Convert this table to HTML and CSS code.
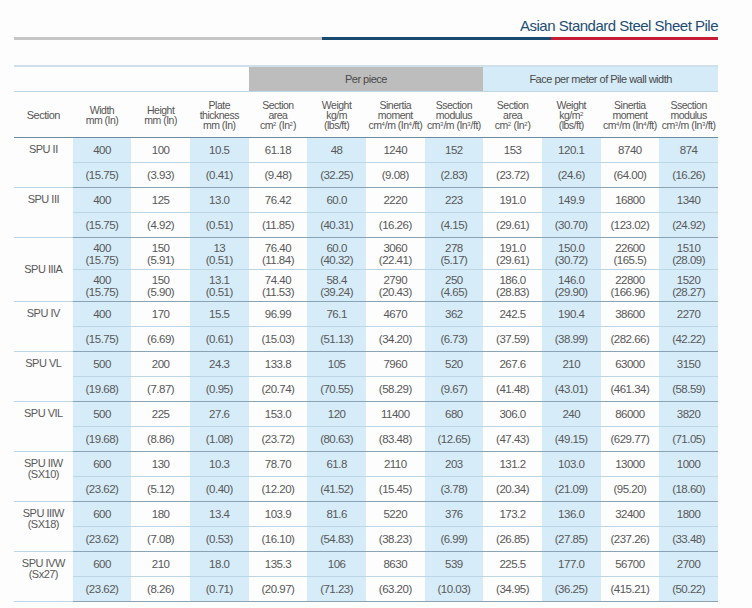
FILE: index.html
```html
<!DOCTYPE html>
<html>
<head>
<meta charset="utf-8">
<link rel="stylesheet" href="styles.css">
</head>
<body>
<div class="page">
  <h1 class="title">Asian Standard Steel Sheet Pile</h1>
  <div class="bar"><span class="g"></span><span class="b"></span><span class="r"></span></div>
  <table class="spec">
    <colgroup>
      <col><col class="sh"><col><col class="sh"><col><col class="sh"><col><col class="sh"><col><col class="sh"><col><col class="sh">
    </colgroup>
    <thead>
      <tr class="groups">
        <th colspan="4"></th>
        <th colspan="4" class="pp">Per piece</th>
        <th colspan="4" class="fm">Face per meter of Pile wall width</th>
      </tr>
      <tr class="heads">
        <th>Section</th>
        <th>Width<br>mm (In)</th>
        <th>Height<br>mm (In)</th>
        <th>Plate<br>thickness<br>mm (In)</th>
        <th>Section<br>area<br>cm<sup>2</sup> (In<sup>2</sup>)</th>
        <th>Weight<br>kg/m<br>(lbs/ft)</th>
        <th>Sinertia<br>moment<br>cm<sup>4</sup>/m (In<sup>4</sup>/ft)</th>
        <th>Ssection<br>modulus<br>cm<sup>3</sup>/m (In<sup>3</sup>/ft)</th>
        <th>Section<br>area<br>cm<sup>2</sup> (In<sup>2</sup>)</th>
        <th>Weight<br>kg/m<sup>2</sup><br>(lbs/ft)</th>
        <th>Sinertia<br>moment<br>cm<sup>4</sup>/m (In<sup>4</sup>/ft)</th>
        <th>Ssection<br>modulus<br>cm<sup>3</sup>/m (In<sup>3</sup>/ft)</th>
      </tr>
    </thead>
    <tbody>
      <tr class="a"><td class="sec" rowspan="2">SPU II</td><td>400</td><td>100</td><td>10.5</td><td>61.18</td><td>48</td><td>1240</td><td>152</td><td>153</td><td>120.1</td><td>8740</td><td>874</td></tr>
      <tr class="b"><td>(15.75)</td><td>(3.93)</td><td>(0.41)</td><td>(9.48)</td><td>(32.25)</td><td>(9.08)</td><td>(2.83)</td><td>(23.72)</td><td>(24.6)</td><td>(64.00)</td><td>(16.26)</td></tr>

      <tr class="a"><td class="sec" rowspan="2">SPU III</td><td>400</td><td>125</td><td>13.0</td><td>76.42</td><td>60.0</td><td>2220</td><td>223</td><td>191.0</td><td>149.9</td><td>16800</td><td>1340</td></tr>
      <tr class="b"><td>(15.75)</td><td>(4.92)</td><td>(0.51)</td><td>(11.85)</td><td>(40.31)</td><td>(16.26)</td><td>(4.15)</td><td>(29.61)</td><td>(30.70)</td><td>(123.02)</td><td>(24.92)</td></tr>

      <tr class="a dbl"><td class="sec mid" rowspan="2">SPU IIIA</td><td>400<br>(15.75)</td><td>150<br>(5.91)</td><td>13<br>(0.51)</td><td>76.40<br>(11.84)</td><td>60.0<br>(40.32)</td><td>3060<br>(22.41)</td><td>278<br>(5.17)</td><td>191.0<br>(29.61)</td><td>150.0<br>(30.72)</td><td>22600<br>(165.5)</td><td>1510<br>(28.09)</td></tr>
      <tr class="b dbl"><td>400<br>(15.75)</td><td>150<br>(5.90)</td><td>13.1<br>(0.51)</td><td>74.40<br>(11.53)</td><td>58.4<br>(39.24)</td><td>2790<br>(20.43)</td><td>250<br>(4.65)</td><td>186.0<br>(28.83)</td><td>146.0<br>(29.90)</td><td>22800<br>(166.96)</td><td>1520<br>(28.27)</td></tr>

      <tr class="a"><td class="sec" rowspan="2">SPU IV</td><td>400</td><td>170</td><td>15.5</td><td>96.99</td><td>76.1</td><td>4670</td><td>362</td><td>242.5</td><td>190.4</td><td>38600</td><td>2270</td></tr>
      <tr class="b"><td>(15.75)</td><td>(6.69)</td><td>(0.61)</td><td>(15.03)</td><td>(51.13)</td><td>(34.20)</td><td>(6.73)</td><td>(37.59)</td><td>(38.99)</td><td>(282.66)</td><td>(42.22)</td></tr>

      <tr class="a"><td class="sec" rowspan="2">SPU VL</td><td>500</td><td>200</td><td>24.3</td><td>133.8</td><td>105</td><td>7960</td><td>520</td><td>267.6</td><td>210</td><td>63000</td><td>3150</td></tr>
      <tr class="b"><td>(19.68)</td><td>(7.87)</td><td>(0.95)</td><td>(20.74)</td><td>(70.55)</td><td>(58.29)</td><td>(9.67)</td><td>(41.48)</td><td>(43.01)</td><td>(461.34)</td><td>(58.59)</td></tr>

      <tr class="a"><td class="sec" rowspan="2">SPU VIL</td><td>500</td><td>225</td><td>27.6</td><td>153.0</td><td>120</td><td>11400</td><td>680</td><td>306.0</td><td>240</td><td>86000</td><td>3820</td></tr>
      <tr class="b"><td>(19.68)</td><td>(8.86)</td><td>(1.08)</td><td>(23.72)</td><td>(80.63)</td><td>(83.48)</td><td>(12.65)</td><td>(47.43)</td><td>(49.15)</td><td>(629.77)</td><td>(71.05)</td></tr>

      <tr class="a"><td class="sec" rowspan="2">SPU IIW<br>(SX10)</td><td>600</td><td>130</td><td>10.3</td><td>78.70</td><td>61.8</td><td>2110</td><td>203</td><td>131.2</td><td>103.0</td><td>13000</td><td>1000</td></tr>
      <tr class="b"><td>(23.62)</td><td>(5.12)</td><td>(0.40)</td><td>(12.20)</td><td>(41.52)</td><td>(15.45)</td><td>(3.78)</td><td>(20.34)</td><td>(21.09)</td><td>(95.20)</td><td>(18.60)</td></tr>

      <tr class="a"><td class="sec" rowspan="2">SPU IIIW<br>(SX18)</td><td>600</td><td>180</td><td>13.4</td><td>103.9</td><td>81.6</td><td>5220</td><td>376</td><td>173.2</td><td>136.0</td><td>32400</td><td>1800</td></tr>
      <tr class="b"><td>(23.62)</td><td>(7.08)</td><td>(0.53)</td><td>(16.10)</td><td>(54.83)</td><td>(38.23)</td><td>(6.99)</td><td>(26.85)</td><td>(27.85)</td><td>(237.26)</td><td>(33.48)</td></tr>

      <tr class="a"><td class="sec" rowspan="2">SPU IVW<br>(Sx27)</td><td>600</td><td>210</td><td>18.0</td><td>135.3</td><td>106</td><td>8630</td><td>539</td><td>225.5</td><td>177.0</td><td>56700</td><td>2700</td></tr>
      <tr class="b"><td>(23.62)</td><td>(8.26)</td><td>(0.71)</td><td>(20.97)</td><td>(71.23)</td><td>(63.20)</td><td>(10.03)</td><td>(34.95)</td><td>(36.25)</td><td>(415.21)</td><td>(50.22)</td></tr>
    </tbody>
  </table>
</div>
</body>
</html>
```

FILE: styles.css
```css
html, body {
  margin: 0;
  padding: 0;
  background: #fdfdfd;
}
body {
  font-family: "Liberation Sans", Arial, sans-serif;
  color: #555;
}
.page {
  width: 704px;
  margin-left: 14px;
  padding-top: 18px;
}
.title {
  margin: 0;
  text-align: right;
  font-size: 15px;
  line-height: 16px;
  font-weight: normal;
  color: #1e4d74;
  letter-spacing: -0.5px;
}
.bar {
  display: flex;
  height: 3px;
  margin-top: 3px;
}
.bar .g { width: 308px; background: #c6c6c6; }
.bar .b { width: 229px; background: #1b4a70; }
.bar .r { flex: 1; background: #c61c36; }

.spec {
  margin-top: 25px;
  width: 704px;
  border-collapse: collapse;
  table-layout: fixed;
  font-size: 11.5px;
  letter-spacing: -0.5px;
  color: #585858;
}
col.sh { background: #d6ecf8; }
.spec td, .spec th {
  padding: 0;
  text-align: center;
  font-weight: normal;
  white-space: nowrap;
}
.groups th {
  height: 24px;
  border-top: 2px solid #d0e0ea;
  border-bottom: 1px solid #bfd6e4;
  background: #fdfdfd;
  font-size: 11px;
}
.groups th.pp { background: #bdbdbd; color: #4a4a4a; }
.groups th.fm { background: #d5ebf8; color: #4a4a4a; }
.heads th {
  height: 45px;
  background: #fdfdfd;
  border-bottom: 1px solid #6e8ba0;
  font-size: 10.5px;
  line-height: 10px;
  vertical-align: middle;
  color: #555;
}
.heads th:first-child {
  font-size: 11px;
}
sup {
  font-size: 6px;
  line-height: 0;
  vertical-align: 3px;
  letter-spacing: 0;
}
.spec tbody td {
  height: 24px;
  line-height: 12px;
}
.spec tr.dbl td {
  height: 31px;
}
.spec tr.a td {
  border-bottom: 1px solid #bdd6e5;
}
.spec tr.b td,
.spec td.sec {
  border-bottom: 1px solid #8aa3b5;
}
.spec td.sec {
  vertical-align: top;
  padding-top: 6px;
  line-height: 11px;
  background: #fdfdfd;
  font-size: 11px;
}
.spec td.sec.mid {
  vertical-align: middle;
  padding-top: 0;
}
```
